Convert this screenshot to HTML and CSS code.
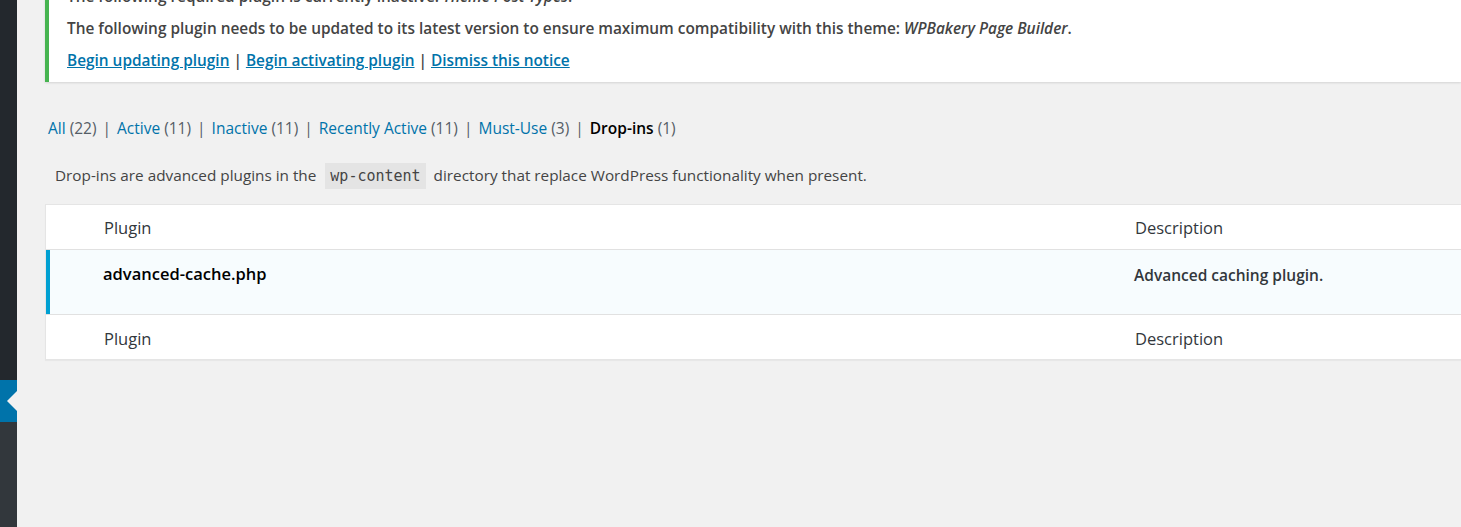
FILE: index.html
```html
<!DOCTYPE html>
<html lang="en">
<head>
<meta charset="utf-8">
<title>Plugins ‹ Drop-ins</title>
<link rel="stylesheet" href="styles.css">
</head>
<body>
<div class="layout">
  <aside class="sidebar">
    <div class="sb-top"></div>
    <div class="sb-current"><span class="sb-arrow"></span></div>
    <div class="sb-bottom"></div>
  </aside>
  <main class="content">
    <div class="notice">
      <p><strong>The following required plugin is currently inactive: <em>Theme Post Types</em>.</strong></p>
      <p><strong>The following plugin needs to be updated to its latest version to ensure maximum compatibility with this theme: <em>WPBakery Page Builder</em>.</strong></p>
      <p><strong><a href="#">Begin updating plugin</a> | <a href="#">Begin activating plugin</a> | <a href="#">Dismiss this notice</a></strong></p>
    </div>

    <ul class="filters">
      <li><a href="#">All <span class="count">(22)</span></a><span class="sep">|</span></li>
      <li><a href="#">Active <span class="count">(11)</span></a><span class="sep">|</span></li>
      <li><a href="#">Inactive <span class="count">(11)</span></a><span class="sep">|</span></li>
      <li><a href="#">Recently Active <span class="count">(11)</span></a><span class="sep">|</span></li>
      <li><a href="#">Must-Use <span class="count">(3)</span></a><span class="sep">|</span></li>
      <li><a href="#" class="current">Drop-ins <span class="count">(1)</span></a></li>
    </ul>

    <p class="description">Drop-ins are advanced plugins in the <code>wp-content</code> directory that replace WordPress functionality when present.</p>

    <div class="plugins">
      <div class="row head">
        <div class="cell col-name">Plugin</div>
        <div class="cell col-desc">Description</div>
      </div>
      <div class="row item active">
        <div class="cell col-name"><strong>advanced-cache.php</strong></div>
        <div class="cell col-desc"><strong>Advanced caching plugin.</strong></div>
      </div>
      <div class="row head foot">
        <div class="cell col-name">Plugin</div>
        <div class="cell col-desc">Description</div>
      </div>
    </div>
  </main>
</div>
</body>
</html>
```
FILE: styles.css
```css
html, body {
  margin: 0;
  padding: 0;
  height: 100%;
  overflow: hidden;
  background: #f1f1f1;
}

body {
  font-family: "Open Sans", "Noto Sans", sans-serif;
  color: #444;
  font-size: 15px;
}

.layout {
  display: flex;
  height: 527px;
}

.sidebar {
  width: 17px;
  flex: 0 0 17px;
  display: flex;
  flex-direction: column;
}

.sb-top {
  height: 380px;
  background: #23282d;
}

.sb-current {
  height: 42px;
  background: #0073aa;
  display: flex;
  align-items: center;
  justify-content: flex-end;
}

.sb-arrow {
  width: 0;
  height: 0;
  border-top: 10px solid transparent;
  border-bottom: 10px solid transparent;
  border-right: 10px solid #f1f1f1;
}

.sb-bottom {
  flex: 1;
  background: #32373c;
}

.content {
  flex: 1;
  padding-left: 28px;
  min-width: 0;
}

.notice {
  margin-top: -24px;
  background: #fff;
  border-left: 4px solid #46b450;
  box-shadow: 0 1px 2px rgba(0, 0, 0, 0.12);
  padding: 1px 12px 2px 16px;
}

.notice p {
  margin: 7px 0;
  padding: 2px;
  font-size: 15.4px;
  line-height: 21px;
  color: #444;
  white-space: nowrap;
}

.notice strong {
  font-weight: 600;
}

.notice a {
  color: #0073aa;
  text-decoration: underline;
}

.filters {
  list-style: none;
  margin: 36px 0 0 3px;
  padding: 0;
  display: flex;
  font-size: 15.5px;
  line-height: 20px;
  color: #555d66;
}

.filters a {
  color: #0073aa;
  text-decoration: none;
}

.filters a.current {
  color: #000;
  font-weight: 600;
}

.filters .count {
  color: #555d66;
  font-weight: 400;
}

.filters .sep {
  color: #555d66;
  margin: 0 6px;
}

.description {
  margin: 27px 0 0 10px;
  font-size: 15.3px;
  line-height: 20px;
  color: #444;
}

.description code {
  font-family: "DejaVu Sans Mono", "Liberation Mono", monospace;
  font-size: 15px;
  background: #e4e4e4;
  padding: 4px 5px 4px;
  margin: 0 4px 0 5px;
  color: #444;
}

.plugins {
  margin-top: 18px;
  background: #fff;
  border: 1px solid #e5e5e5;
  border-right: 0;
  box-shadow: 0 1px 1px rgba(0, 0, 0, 0.04);
}

.row {
  display: flex;
}

.row.head {
  height: 44px;
  border-bottom: 1px solid #e1e1e1;
  align-items: center;
  font-size: 16.5px;
  color: #32373c;
}

.row.head .cell {
  padding-top: 1px;
}

.row.foot {
  border-bottom: 0;
  border-top: 1px solid #e1e1e1;
}

.row.foot .cell {
  padding-top: 3px;
}

.row.item {
  height: 64px;
  background: #f7fcfe;
  border-left: 4px solid #00a0d2;
}

.col-name {
  width: 1079px;
  flex: 0 0 1079px;
  box-sizing: border-box;
  padding-left: 58px;
}

.col-desc {
  flex: 1;
  padding-left: 10px;
}

.row.item .col-name {
  width: 1075px;
  flex-basis: 1075px;
  padding-left: 53px;
  padding-top: 13px;
  font-size: 16.5px;
  line-height: 21px;
  color: #000;
}

.row.item .col-name strong {
  font-weight: 600;
}

.row.item .col-desc {
  padding-left: 9px;
  padding-top: 16px;
  font-size: 15.5px;
  line-height: 19px;
  color: #32373c;
}

.row.item .col-desc strong {
  font-weight: 600;
}
```
